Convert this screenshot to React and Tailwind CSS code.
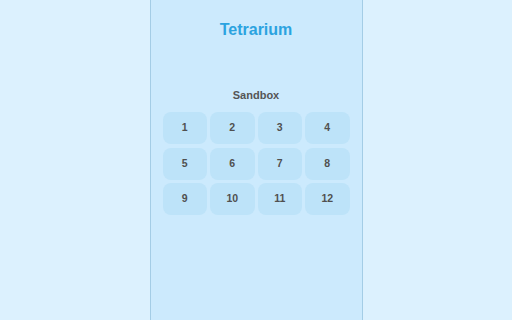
export default function App() {
  const nums = [1, 2, 3, 4, 5, 6, 7, 8, 9, 10, 11, 12];
  return (
    <div className="w-full h-[320px] bg-[#dcf1fe] flex justify-center" style={{ fontFamily: '"Liberation Sans", Arial, sans-serif' }}>
      <div className="w-[213px] h-full bg-[#cceafd] border-x border-[#a4cde6] px-3 flex flex-col">
        <h1 className="mt-[20px] h-[20px] leading-[20px] text-center text-[16px] font-bold text-[#2ba3e0]">Tetrarium</h1>
        <h2 className="mt-[48px] h-[14px] leading-[14px] text-center text-[11px] font-bold text-[#555]">Sandbox</h2>
        <div className="mt-[10px] grid grid-cols-4 gap-x-[3px] gap-y-[3.5px]">
          {nums.map((n) => (
            <div key={n} className="h-[32px] rounded-[8px] bg-[#bde3f9] flex items-center justify-center text-[10.5px] font-bold text-[#505050]">
              {n}
            </div>
          ))}
        </div>
      </div>
    </div>
  );
}
